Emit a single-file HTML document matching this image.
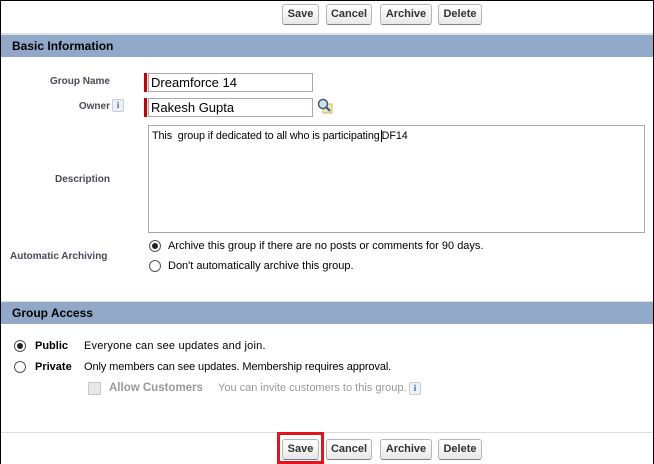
<!DOCTYPE html>
<html><head><style>
*{margin:0;padding:0;box-sizing:border-box}
body{width:654px;height:464px;background:#fff;font-family:"Liberation Sans",Arial,sans-serif;position:relative;overflow:hidden}
.frame{position:absolute;left:0;top:0;width:654px;height:464px;border:1px solid #000;border-bottom:none}
.a{position:absolute}
.btn{position:absolute;height:21px;border:1px solid #b5b5b5;border-bottom-color:#7f7f7f;border-radius:3px;background:linear-gradient(#fff,#e8e8e8);font-size:11px;font-weight:bold;color:#333;text-align:center;line-height:19px}
.hdr{position:absolute;left:1px;width:652px;height:23px;background:#91a8c8;font-size:12px;font-weight:bold;color:#000;padding-left:11px;line-height:23px;border-top:1px solid #dfe4ea}
.lbl{position:absolute;font-size:10px;font-weight:bold;color:#4a4a56;text-align:right}
.inp{position:absolute;height:19px;border:1px solid #a8a8a8;font-size:13px;line-height:17px;padding-left:2px;color:#000}
.req{position:absolute;width:3px;background:#c00}
.rad{position:absolute;width:12px;height:12px;border:1px solid #555;border-radius:50%;background:#fff}
.rad.on::after{content:"";position:absolute;left:2px;top:2px;width:6px;height:6px;border-radius:50%;background:#222}
.t{position:absolute;font-size:11px;color:#000;white-space:nowrap}
.info{position:absolute;width:12px;height:13px;border:1px solid #c6cdd6;background:#eef2f7;border-radius:2px;font-size:9px;font-weight:bold;color:#2a6bb3;text-align:center;line-height:11px;font-family:"Liberation Serif",serif}
</style></head><body>
<div class="frame"></div>
<div class="btn" style="left:282px;top:4px;width:37px">Save</div>
<div class="btn" style="left:326px;top:4px;width:46px">Cancel</div>
<div class="btn" style="left:380px;top:4px;width:52px">Archive</div>
<div class="btn" style="left:438px;top:4px;width:44px">Delete</div>
<div class="a" style="left:1px;top:33px;width:652px;height:1px;background:#dcdcdc"></div>
<div class="hdr" style="top:34px">Basic Information</div>

<div class="lbl" style="left:20px;top:76px;width:90px">Group Name</div>
<div class="req" style="left:144px;top:73px;height:19px"></div>
<div class="inp" style="left:148px;top:73px;width:165px">Dreamforce 14</div>
<div class="lbl" style="left:20px;top:101px;width:90px">Owner</div>
<div class="info" style="left:112px;top:99px">i</div>
<div class="req" style="left:144px;top:98px;height:19px"></div>
<div class="inp" style="left:148px;top:98px;width:165px">Rakesh Gupta</div>
<svg class="a" style="left:317px;top:98px" width="16" height="16"><rect x="6" y="6" width="9" height="9" fill="#f3e8b0" stroke="#c8b670"/><circle cx="6" cy="6" r="4.5" fill="#cfe0f0" stroke="#3a5a80" stroke-width="1.5"/><line x1="9" y1="9" x2="13" y2="13" stroke="#3a5a80" stroke-width="2"/></svg>

<div class="lbl" style="left:20px;top:174px;width:90px">Description</div>
<div class="a" style="left:148px;top:125px;width:497px;height:108px;border:1px solid #a8a8a8;font-size:10.8px;padding:4px 3px;letter-spacing:-0.1px">This &nbsp;group if dedicated to all who is participating<span style="border-left:1px solid #000;margin-left:1px"></span>DF14</div>

<div class="lbl" style="left:10px;top:251px;width:100px;text-align:left">Automatic Archiving</div>
<div class="rad on" style="left:149px;top:240px"></div>
<div class="t" style="left:168px;top:240px">Archive this group if there are no posts or comments for 90 days.</div>
<div class="rad" style="left:149px;top:260px"></div>
<div class="t" style="left:168px;top:260px">Don't automatically archive this group.</div>

<div class="hdr" style="top:301px">Group Access</div>
<div class="rad on" style="left:14px;top:340px"></div>
<div class="t" style="left:35px;top:340px;font-weight:bold">Public</div>
<div class="t" style="left:84px;top:340px;letter-spacing:0.2px">Everyone can see updates and join.</div>
<div class="rad" style="left:14px;top:361px"></div>
<div class="t" style="left:35px;top:361px;font-weight:bold">Private</div>
<div class="t" style="left:84px;top:361px;letter-spacing:-0.1px">Only members can see updates. Membership requires approval.</div>
<div class="a" style="left:88px;top:382px;width:13px;height:13px;border:1px solid #c8c8c8;background:#e8e8e8"></div>
<div class="t" style="left:109px;top:382px;font-weight:bold;color:#999;font-size:11.5px">Allow Customers</div>
<div class="t" style="left:218px;top:382px;color:#999;font-size:11px">You can invite customers to this group.</div>
<div class="info" style="left:409px;top:382px">i</div>

<div class="a" style="left:1px;top:432px;width:652px;height:1px;background:#dcdcdc"></div>
<div class="a" style="left:277px;top:432px;width:47px;height:32px;border:3px solid #e4141e"></div>
<div class="btn" style="left:282px;top:439px;width:37px">Save</div>
<div class="btn" style="left:326px;top:439px;width:46px">Cancel</div>
<div class="btn" style="left:380px;top:439px;width:52px">Archive</div>
<div class="btn" style="left:438px;top:439px;width:44px">Delete</div>
</body></html>
